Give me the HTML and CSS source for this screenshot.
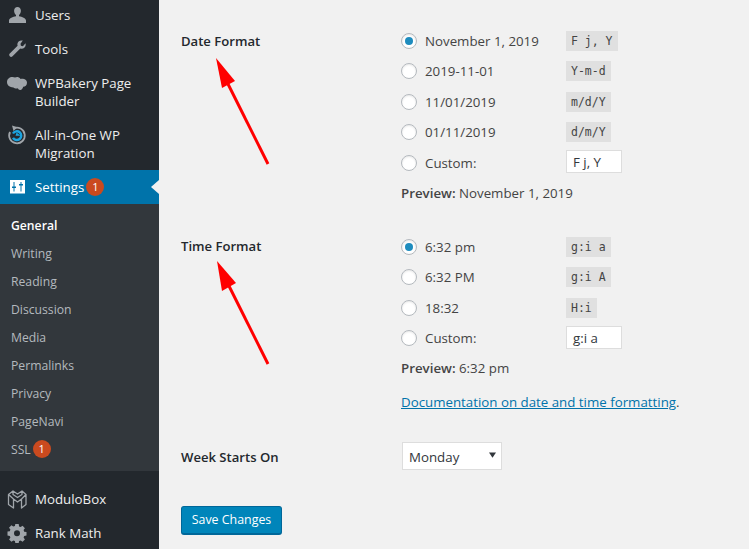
FILE: index.html
```html
<!DOCTYPE html>
<html lang="en">
<head>
<meta charset="utf-8">
<title>General Settings</title>
<link rel="stylesheet" href="styles.css">
</head>
<body>
<div class="page">
  <nav class="sidebar">
    <ul class="menu">
      <li class="item"><svg class="icon" viewBox="0 0 20 20"><path d="M10.500 2c2 0 3.400 1.500 3.400 3.700 0 1.800-.8 3.300-1.900 4.200v1.300c3 .6 7 2 7 4.300V18H2v-2.500c0-2.300 4-3.700 7-4.300V9.900C7.900 9 7.100 7.500 7.100 5.700 7.100 3.500 8.500 2 10.500 2z"/></svg><span>Users</span></li>
      <li class="item"><svg class="icon" viewBox="0 0 20 20"><path d="M18.500 4.200c.5 1.500.1 3.200-1 4.300-1.100 1.100-2.700 1.500-4.200 1l-7.800 7.800c-.8.800-2 .8-2.700 0-.8-.8-.8-2 0-2.700l7.800-7.800c-.5-1.500-.1-3.100 1-4.200 1.100-1.100 2.700-1.500 4.200-1L13.500 4.700l.4 2.100 2 .4z"/></svg><span>Tools</span></li>
      <li class="item"><svg class="icon" viewBox="0 0 20 20"><path d="M0 9c0-3 2.500-5 5.500-5 1 0 1.800.2 2.500.6C9 4 10.200 3.800 11.400 4.200c1.100.4 1.800 1 2.200 1.800 2.800-.7 6.400.5 6.400 3.800 0 2.600-1.800 4-3.800 4-.5 2.300-1.900 3.400-3.200 3.100-1 0-1.700-.6-2.100-1.600-1.500.4-3.400.2-4.400-.9C3 14.500 0 12.500 0 9z"/></svg><span>WPBakery Page Builder</span></li>
      <li class="item"><svg class="icon" viewBox="0 0 20 20"><path class="ring-grey" d="M6.500 3.500A7.800 7.800 0 1 1 3 7"/><path class="fill-grey" d="M5 .5l5.500 1.800-4 3.700z"/><path class="ring-blue" d="M6 8.500A4.400 4.400 0 1 1 6 12.800"/><path class="fill-blue" d="M9.500 7.500l4 3.200h-5z"/></svg><span>All-in-One WP Migration</span></li>
      <li class="item item-current"><svg class="icon icon-white" viewBox="0 0 20 20"><path fill-rule="evenodd" d="M3 3h15v13.500H3zM6.500 5v4.500H5V11h1.500v3.500h1V11H9V9.500H7.500V5zm7 0v2H12v1.500h1.500v6h1v-6H16V7h-1.500V5z"/></svg><span>Settings</span><b class="badge">1</b></li>
    </ul>
    <ul class="submenu">
      <li class="sub sub-current">General</li>
      <li class="sub">Writing</li>
      <li class="sub">Reading</li>
      <li class="sub">Discussion</li>
      <li class="sub">Media</li>
      <li class="sub">Permalinks</li>
      <li class="sub">Privacy</li>
      <li class="sub">PageNavi</li>
      <li class="sub">SSL<b class="badge">1</b></li>
    </ul>
    <ul class="menu menu-lower">
      <li class="item"><svg class="icon" viewBox="0 0 20 20"><path class="stroke-grey" d="M1.500 5.500L6 2l4.500 3L15 2l4 3.500v10L14.500 19v-9l-4 3-4-3v9L1.500 15.500zM1.500 5.500L6.500 10M19 5.500L14.500 10M6 2v3.500l4.500 3 4.500-3V2"/></svg><span>ModuloBox</span></li>
      <li class="item"><svg class="icon" viewBox="0 0 20 20"><path fill-rule="evenodd" d="M8.300 1.500h3.400l.4 2.300 1.500.7 2-1.300 2.300 2.400-1.300 1.900.6 1.600 2.300.4v3.400l-2.300.4-.6 1.500 1.300 2-2.300 2.300-2-1.300-1.500.6-.4 2.100H8.300l-.4-2.100-1.500-.6-2 1.300-2.300-2.300 1.300-2-.6-1.500-2.300-.4V9l2.300-.4.6-1.600L2 5.100l2.400-2.400 1.900 1.300 1.600-.7zM10 7.700a3 3 0 100 6 3 3 0 000-6z" transform="translate(0 -.4)"/></svg><span>Rank Math</span></li>
    </ul>
  </nav>

  <main class="content">
    <section class="row row-date">
      <h2 class="label">Date Format</h2>
      <div class="field">
        <label class="choice"><i class="radio radio-on"></i><span class="choice-text">November 1, 2019</span><code>F j, Y</code></label>
        <label class="choice"><i class="radio"></i><span class="choice-text">2019-11-01</span><code>Y-m-d</code></label>
        <label class="choice"><i class="radio"></i><span class="choice-text">11/01/2019</span><code>m/d/Y</code></label>
        <label class="choice"><i class="radio"></i><span class="choice-text">01/11/2019</span><code>d/m/Y</code></label>
        <label class="choice"><i class="radio"></i><span class="choice-text">Custom:</span><span class="input">F j, Y</span></label>
        <p class="preview"><strong>Preview:</strong> November 1, 2019</p>
      </div>
    </section>

    <section class="row row-time">
      <h2 class="label">Time Format</h2>
      <div class="field">
        <label class="choice"><i class="radio radio-on"></i><span class="choice-text">6:32 pm</span><code>g:i a</code></label>
        <label class="choice"><i class="radio"></i><span class="choice-text">6:32 PM</span><code>g:i A</code></label>
        <label class="choice"><i class="radio"></i><span class="choice-text">18:32</span><code>H:i</code></label>
        <label class="choice"><i class="radio"></i><span class="choice-text">Custom:</span><span class="input">g:i a</span></label>
        <p class="preview"><strong>Preview:</strong> 6:32 pm</p>
        <p class="doc"><a href="#">Documentation on date and time formatting</a>.</p>
      </div>
    </section>

    <section class="row row-week">
      <h2 class="label">Week Starts On</h2>
      <div class="field">
        <div class="select">Monday<svg class="caret" viewBox="0 0 8 6"><path d="M0 0h8L4 6z"/></svg></div>
      </div>
    </section>

    <button class="save" type="button">Save Changes</button>
  </main>

  <svg class="arrows" viewBox="0 0 749 549">
    <g class="arrow">
      <path class="shaft" d="M268 164L228 84"/>
      <path class="head" d="M216 58L235 81 222 88z"/>
      <path class="shaft" d="M268 364L229 286"/>
      <path class="head" d="M217 261L236 283 222 291z"/>
    </g>
  </svg>
</div>
</body>
</html>
```

FILE: styles.css
```css
* { box-sizing: border-box; }
html, body { margin: 0; padding: 0; height: 549px; overflow: hidden; }
body { background: #f1f1f1; font-family: "Open Sans", "Noto Sans", sans-serif; color: #444; font-size: 13px; }
ul { list-style: none; margin: 0; padding: 0; }
.page { position: relative; display: flex; width: 749px; height: 549px; overflow: hidden; }

.sidebar { flex: none; width: 159px; height: 549px; background: #23282d; color: #eee; font-size: 13.300px; overflow: hidden; }
.menu { margin-top: -2px; }
.menu-lower { margin-top: 11px; }
.item { position: relative; display: flex; align-items: center; padding: 8px 8px 8px 35px; min-height: 34px; line-height: 18px; }
.item .icon { position: absolute; left: 7px; top: 7px; width: 20px; height: 20px; fill: #a0a5aa; }
.item .icon-white { fill: #fff; }
.item-current { background: #0073aa; color: #fff; }
.item-current::after { content: ""; position: absolute; right: 0; top: 10px; border: 7px solid transparent; border-right-color: #f1f1f1; border-left-width: 0; border-right-width: 8px; }
.item .ring-grey { fill: none; stroke: #a0a5aa; stroke-width: 1.800; }
.item .fill-grey { fill: #a0a5aa; }
.item .ring-blue { fill: none; stroke: #1ca4e0; stroke-width: 2.400; }
.item .fill-blue { fill: #1ca4e0; }
.item .stroke-grey { fill: none; stroke: #a0a5aa; stroke-width: 1.300; stroke-linejoin: round; }
.badge { display: inline-block; width: 18px; height: 18px; margin-left: 2px; border-radius: 50%; background: #ca4a1f; color: #fff; font-size: 11px; font-weight: 400; line-height: 18px; text-align: center; }

.submenu { background: #32373c; padding: 7px 0 8px; }
.sub { display: flex; align-items: center; height: 28px; padding-left: 11px; color: #b4b9be; font-size: 12.200px; }
.sub-current { color: #fff; font-weight: 600; }

.content { position: relative; flex: 1; padding: 0 0 0 22px; }
.row { display: grid; grid-template-columns: 220px 1fr; }
.row-date { padding-top: 25.500px; }
.row-time { padding-top: 28.750px; }
.row-week { padding-top: 30px; }
.label { margin: 5px 0 0; font-size: 13.100px; font-weight: 600; color: #23282d; line-height: 20px; }
.field { min-width: 0; }
.choice { display: flex; align-items: center; height: 30.500px; }
.radio { flex: none; width: 16px; height: 16px; border-radius: 50%; background: #fff; border: 1px solid #b4b9be; box-shadow: inset 0 1px 2px rgba(0,0,0,.1); margin-right: 8px; position: relative; }
.radio-on::after { content: ""; position: absolute; left: 3px; top: 3px; width: 8px; height: 8px; border-radius: 50%; background: #1e8cbe; }
.choice-text { width: 141px; font-size: 13.300px; color: #444; }
code { display: inline-block; height: 20px; padding: 0 5px; background: #e0e0e0; color: #444; font: 11.500px/20px "DejaVu Sans Mono", "Liberation Mono", monospace; white-space: pre; }
.input { width: 56px; height: 23px; margin-bottom: 2px; padding-left: 6px; background: #fff; border: 1px solid #ddd; font-size: 13.300px; line-height: 22px; color: #32373c; }
.preview { margin: 4.500px 0 0; font-size: 13.300px; line-height: 20px; }
.preview strong { font-weight: 600; }
.doc { margin: 14px 0 0; font-size: 13.300px; line-height: 20px; }
.doc a { color: #0073aa; }
.select { position: relative; width: 100px; height: 28px; margin-left: 1px; padding-left: 6px; background: #fff; border: 1px solid #ddd; font-size: 13.300px; line-height: 28px; color: #32373c; }
.caret { position: absolute; right: 5px; top: 9px; width: 7px; height: 6px; fill: #32373c; }
.save { display: block; margin: 36px 0 0; width: 101px; height: 29px; padding: 0; background: #0085ba; border: 1px solid #006799; border-bottom-width: 2px; border-radius: 3px; color: #fff; font: 12.400px/26px "Open Sans", sans-serif; }

.arrows { position: absolute; inset: 0; width: 749px; height: 549px; pointer-events: none; }
.shaft { stroke: #ff0000; stroke-width: 3; fill: none; }
.head { fill: #ff0000; }
```
